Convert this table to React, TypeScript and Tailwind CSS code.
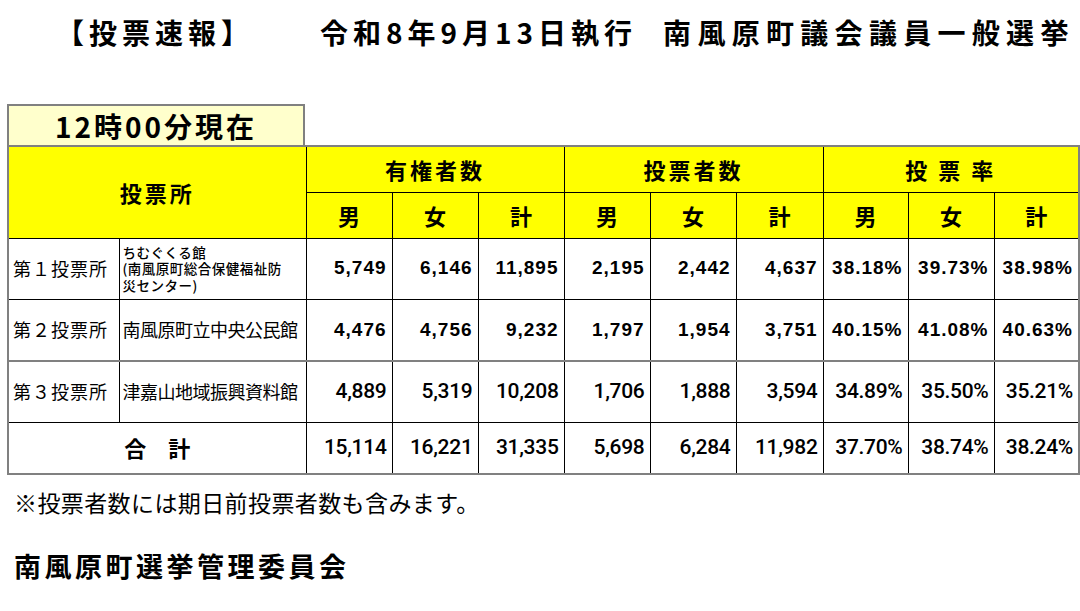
const jp = "font-['Noto_Sans_CJK_JP',sans-serif]";

type Row = {
  label: string;
  name: React.ReactNode;
  small?: boolean;
  values: string[];
  narrow?: boolean;
  topGray?: boolean;
};

const rows: Row[] = [
  {
    label: '第１投票所',
    name: (
      <>
        ちむぐくる館
        <br />
        (南風原町総合保健福祉防
        <br />
        災センター)
      </>
    ),
    small: true,
    values: ['5,749', '6,146', '11,895', '2,195', '2,442', '4,637', '38.18%', '39.73%', '38.98%'],
  },
  {
    label: '第２投票所',
    name: '南風原町立中央公民館',
    values: ['4,476', '4,756', '9,232', '1,797', '1,954', '3,751', '40.15%', '41.08%', '40.63%'],
  },
  {
    label: '第３投票所',
    name: '津嘉山地域振興資料館',
    values: ['4,889', '5,319', '10,208', '1,706', '1,888', '3,594', '34.89%', '35.50%', '35.21%'],
    narrow: true,
    topGray: true,
  },
];

const total = ['15,114', '16,221', '31,335', '5,698', '6,284', '11,982', '37.70%', '38.74%', '38.24%'];

const colW = ['w-[111px]', 'w-[187px]', 'w-[86px]', 'w-[86px]', 'w-[86px]', 'w-[86px]', 'w-[86px]', 'w-[87px]', 'w-[85px]', 'w-[86px]', 'w-[85px]'];

function NumCell({ v, narrow }: { v: string; narrow?: boolean }) {
  return (
    <td
      className={`border border-black text-right pr-[5px] ${
        narrow
          ? "font-['Roboto',sans-serif] font-medium text-[21px] tracking-[-0.3px]"
          : "font-['Liberation_Sans',sans-serif] font-bold text-[19px] tracking-[1px]"
      }`}
    >
      {v}
    </td>
  );
}

export default function App() {
  return (
    <div className={`w-[1080px] h-[611px] bg-white text-black ${jp} overflow-hidden`}>
      {/* Title */}
      <div className="flex items-center h-[64px] pl-[56px] font-bold text-[28px] tracking-[5px] leading-none">
        <span>【投票速報】</span>
        <span className="ml-[66px]">令和8年9月13日執行</span>
        <span className="ml-[26px] tracking-[6.3px]">南風原町議会議員一般選挙</span>
      </div>

      <div className="pl-[7px] pt-[40px]">
        {/* time cell */}
        <div className="w-[298px] h-[41px] bg-[#ffffcc] border-2 border-b-0 border-[#808080] flex items-center justify-center font-bold text-[28px] tracking-[3px]">
          12時00分現在
        </div>

        <table className="border-collapse table-fixed w-[1071px] border-2 border-[#808080]">
          <colgroup>
            {colW.map((w, i) => (
              <col key={i} className={w} />
            ))}
          </colgroup>
          <tbody>
            <tr className="h-[46px] bg-[#ffff00] font-bold text-[22px] tracking-[3px]">
              <td colSpan={2} rowSpan={2} className="border border-black text-center">
                投票所
              </td>
              <td colSpan={3} className="border border-black text-center">有権者数</td>
              <td colSpan={3} className="border border-black text-center">投票者数</td>
              <td colSpan={3} className="border border-black text-center">投 票 率</td>
            </tr>
            <tr className="h-[46px] bg-[#ffff00] font-bold text-[22px]">
              {['男', '女', '計', '男', '女', '計', '男', '女', '計'].map((t, i) => (
                <td key={i} className="border border-black text-center">
                  {t}
                </td>
              ))}
            </tr>
            {rows.map((r, i) => (
              <tr
                key={i}
                className={`${i === 1 ? 'h-[62px]' : 'h-[61px]'} ${r.topGray ? 'border-t-2 border-t-[#808080]' : ''}`}
              >
                <td className="border border-black pl-[4px] text-[18px] tracking-[1px]">{r.label}</td>
                <td
                  className={`border border-black pl-[3px] ${
                    r.small ? 'text-[13.5px] tracking-[0.5px] leading-[16.5px] font-medium' : 'text-[18px] tracking-[-0.5px]'
                  }`}
                >
                  {r.name}
                </td>
                {r.values.map((v, j) => (
                  <NumCell key={j} v={v} narrow={r.narrow} />
                ))}
              </tr>
            ))}
            <tr className="h-[52px]">
              <td colSpan={2} className="border border-black text-center font-bold text-[22px]">
                合　計
              </td>
              {total.map((v, j) => (
                <NumCell key={j} v={v} narrow />
              ))}
            </tr>
          </tbody>
        </table>
      </div>

      <div className="pl-[14px] pt-[12px] text-[23px] tracking-[0.4px] leading-[30px]">
        ※投票者数には期日前投票者数も含みます。
      </div>
      <div className="pl-[14px] pt-[32px] font-bold text-[27px] tracking-[3.5px] leading-[34px]">
        南風原町選挙管理委員会
      </div>
    </div>
  );
}
